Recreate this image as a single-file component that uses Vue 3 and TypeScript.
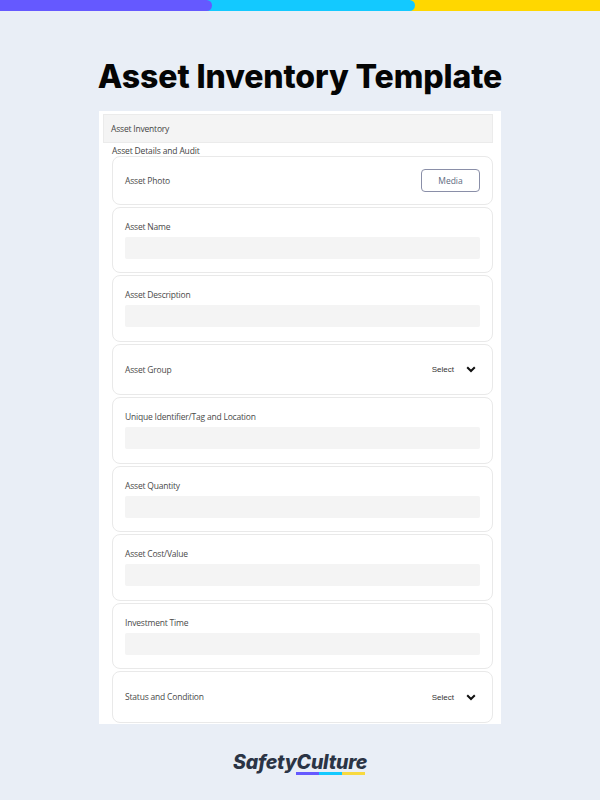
<script setup lang="ts">
interface Field {
  label: string
  kind: 'input' | 'select' | 'media'
  height: number
}

const fields: Field[] = [
  { label: 'Asset Photo', kind: 'media', height: 49 },
  { label: 'Asset Name', kind: 'input', height: 66 },
  { label: 'Asset Description', kind: 'input', height: 67 },
  { label: 'Asset Group', kind: 'select', height: 51 },
  { label: 'Unique Identifier/Tag and Location', kind: 'input', height: 67 },
  { label: 'Asset Quantity', kind: 'input', height: 66 },
  { label: 'Asset Cost/Value', kind: 'input', height: 67 },
  { label: 'Investment Time', kind: 'input', height: 66 },
  { label: 'Status and Condition', kind: 'select', height: 52 },
]
</script>

<template>
  <div class="page">
    <div class="bars">
      <div class="bar bar-yellow"></div>
      <div class="bar bar-blue"></div>
      <div class="bar bar-purple"></div>
    </div>

    <h1 class="title">Asset Inventory Template</h1>

    <div class="sheet">
      <div class="sheet-header">Asset Inventory</div>
      <div class="section-name">Asset Details and Audit</div>
      <div class="cards">
        <div
          v-for="field in fields"
          :key="field.label"
          class="card"
          :class="`card-${field.kind}`"
          :style="{ height: field.height + 'px' }"
        >
          <div class="label">{{ field.label }}</div>
          <div v-if="field.kind === 'input'" class="input"></div>
          <button v-if="field.kind === 'media'" class="media">Media</button>
          <div v-if="field.kind === 'select'" class="select">
            <span>Select</span>
            <svg width="10" height="7" viewBox="0 0 10 7">
              <path d="M1.2 1.2 5 5 8.8 1.2" fill="none" stroke="#111" stroke-width="2" />
            </svg>
          </div>
        </div>
      </div>
    </div>

    <div class="logo">
      <span class="logo-text">SafetyCulture</span>
      <div class="logo-line">
        <i class="line-purple"></i>
        <i class="line-blue"></i>
        <i class="line-yellow"></i>
      </div>
    </div>
  </div>
</template>

<style>
body {
  margin: 0;
  background: #e9eef6;
}
</style>

<style scoped>
.page {
  width: 600px;
  height: 800px;
  overflow: hidden;
  background: #e9eef6;
  font-family: 'Open Sans', sans-serif;
  display: flex;
  flex-direction: column;
  align-items: center;
}

.bars {
  width: 100%;
  height: 11px;
  display: flex;
  background: #ffd700;
}

.bar {
  height: 11px;
}

.bar-purple {
  order: 1;
  width: 212px;
  background: #6559ff;
  border-radius: 0 6px 6px 0;
  position: relative;
  z-index: 2;
}

.bar-blue {
  order: 2;
  width: 203px;
  margin-left: -6px;
  padding-left: 6px;
  background: #13c9ff;
  border-radius: 0 6px 6px 0;
  position: relative;
  z-index: 1;
}

.bar-yellow {
  order: 3;
  flex: 1;
  background: #ffd700;
}

.title {
  margin: 47px 0 0;
  height: 38px;
  font-family: Inter, sans-serif;
  font-size: 32px;
  line-height: 38px;
  font-weight: 800;
  letter-spacing: -0.1px;
  color: #050505;
  white-space: nowrap;
}

.sheet {
  margin-top: 15px;
  width: 402px;
  height: 613px;
  box-sizing: border-box;
  background: #fff;
  padding: 3px 8px 0 4px;
}

.sheet-header {
  height: 29px;
  box-sizing: border-box;
  display: flex;
  align-items: center;
  padding-left: 7px;
  background: #f4f4f4;
  border: 1px solid #ebebeb;
  font-size: 8.5px;
  letter-spacing: -0.2px;
  color: #444;
}

.section-name {
  margin: 3px 0 0 9px;
  height: 10px;
  font-size: 8.5px;
  letter-spacing: -0.15px;
  line-height: 10px;
  color: #444;
}

.cards {
  margin: 0 0 0 9px;
  display: flex;
  flex-direction: column;
  gap: 2px;
}

.card {
  box-sizing: border-box;
  border: 1px solid #e9e9e9;
  border-radius: 8px;
  padding: 0 12px;
  background: #fff;
}

.card-media,
.card-select {
  display: flex;
  align-items: center;
  justify-content: space-between;
}

.label {
  font-size: 8.5px;
  letter-spacing: -0.2px;
  line-height: 12px;
  color: #4a4a4a;
}

.card-input .label {
  margin-top: 13px;
}

.input {
  margin-top: 4px;
  height: 22px;
  border-radius: 2px;
  background: #f4f4f4;
}

.media {
  width: 59px;
  height: 23px;
  padding: 0;
  background: #fff;
  border: 1px solid #8a8fa8;
  border-radius: 4px;
  font-family: inherit;
  font-size: 8.5px;
  color: #5b6a80;
}

.select {
  display: flex;
  align-items: center;
  gap: 12px;
  padding-right: 4px;
  font-family: 'Liberation Sans', sans-serif;
  font-size: 8px;
  color: #333;
}

.logo {
  margin-top: 26px;
  position: relative;
  width: 134px;
}

.logo-text {
  display: block;
  font-family: Inter, sans-serif;
  font-size: 19.5px;
  line-height: 24px;
  font-weight: 800;
  font-style: italic;
  letter-spacing: -0.2px;
  color: #2b3445;
  white-space: nowrap;
}

.logo-line {
  position: absolute;
  left: 63px;
  top: 22px;
  width: 69px;
  height: 2.5px;
  display: flex;
}

.logo-line i {
  display: block;
  height: 100%;
  flex: 1;
}

.line-purple {
  background: #6559ff;
}

.line-blue {
  background: #13c9ff;
}

.line-yellow {
  background: #f8d93f;
}
</style>
